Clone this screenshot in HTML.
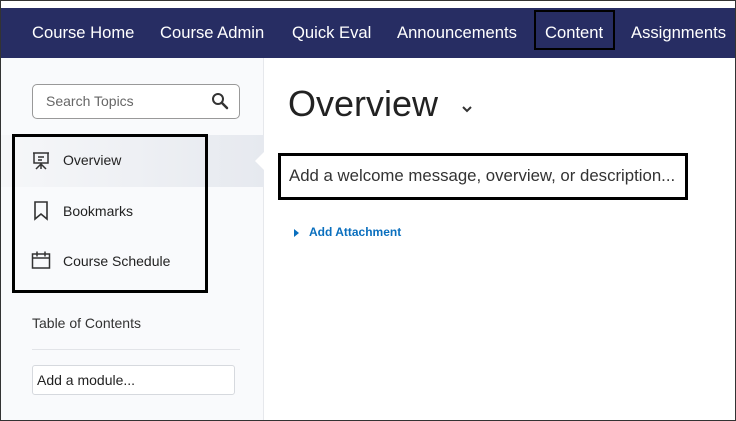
<!DOCTYPE html>
<html><head><style>
*{margin:0;padding:0;box-sizing:border-box}
body{width:736px;height:421px;overflow:hidden;background:#fff;font-family:"Liberation Sans",sans-serif;position:relative}
.frame{position:absolute;left:0;top:0;width:736px;height:421px;border:1px solid #333;z-index:10;pointer-events:none}
.nav{position:absolute;left:0;top:8px;width:736px;height:50px;background:#272d63}
.nav span{position:absolute;top:15px;color:#fff;font-size:16.6px;white-space:nowrap}
.side{position:absolute;left:0;top:58px;width:264px;height:363px;background:#f9fafc;border-right:1px solid #e6e8ec}
.a{position:absolute}
</style></head><body>
<div class="nav">
<span style="left:32px">Course Home</span>
<span style="left:160px">Course Admin</span>
<span style="left:292px">Quick Eval</span>
<span style="left:397px">Announcements</span>
<span style="left:545px">Content</span>
<span style="left:631px">Assignments</span>
<div class="a" style="left:534px;top:2px;width:81px;height:40px;border:2px solid #000"></div>
</div>
<div class="side"></div>
<div class="a" style="left:32px;top:84px;width:208px;height:35px;border:1px solid #999;border-radius:5px;background:#fff"></div>
<div class="a" style="left:46px;top:93px;font-size:14px;color:#666">Search Topics</div>
<svg class="a" style="left:211px;top:92px" width="18" height="18" viewBox="0 0 18 18"><circle cx="7" cy="7" r="5" fill="none" stroke="#333" stroke-width="2"/><path d="M11 11 L16 16" stroke="#333" stroke-width="2.5" stroke-linecap="round"/></svg>
<div class="a" style="left:0;top:135px;width:264px;height:52px;background:linear-gradient(90deg,#f6f7f9,#e6e9ef)"></div>
<div class="a" style="left:255px;top:151px;width:0;height:0;border-top:10px solid transparent;border-bottom:10px solid transparent;border-right:10px solid #fff"></div>
<svg class="a" style="left:31px;top:151px" width="20" height="20" viewBox="0 0 20 20" fill="none" stroke="#333" stroke-width="1.5"><path d="M2 2h16M3 2v10h14V2M7 6h6M7 9h4M10 12v6M10 13l-5 5M10 13l5 5"/></svg>
<div class="a" style="left:63px;top:152px;font-size:14px;color:#222">Overview</div>
<svg class="a" style="left:33px;top:201px" width="16" height="20" viewBox="0 0 16 20" fill="none" stroke="#333" stroke-width="1.6"><path d="M2 1h12v17l-6-5-6 5z"/></svg>
<div class="a" style="left:63px;top:203px;font-size:14px;color:#222">Bookmarks</div>
<svg class="a" style="left:31px;top:250px" width="20" height="20" viewBox="0 0 20 20" fill="none" stroke="#333" stroke-width="1.5"><rect x="1.5" y="4" width="17" height="14"/><path d="M1.5 8h17M6 1.5v5M14 1.5v5"/></svg>
<div class="a" style="left:63px;top:253px;font-size:14px;color:#222">Course Schedule</div>
<div class="a" style="left:12px;top:134px;width:196px;height:159px;border:3px solid #000"></div>
<div class="a" style="left:32px;top:315px;font-size:14px;color:#333">Table of Contents</div>
<div class="a" style="left:32px;top:349px;width:208px;height:1px;background:#e2e4e8"></div>
<div class="a" style="left:32px;top:365px;width:203px;height:30px;border:1px solid #d6d9de;border-radius:3px;background:#fff"></div>
<div class="a" style="left:37px;top:372px;font-size:14px;color:#222">Add a module...</div>
<div class="a" style="left:288px;top:83px;font-size:36px;color:#222">Overview</div>
<svg class="a" style="left:460px;top:104px" width="14" height="10" viewBox="0 0 14 10"><path d="M3 3l4 4 4-4" fill="none" stroke="#333" stroke-width="2"/></svg>
<div class="a" style="left:278px;top:153px;width:410px;height:47px;border:3px solid #000"></div>
<div class="a" style="left:289px;top:166px;font-size:16.8px;color:#333">Add a welcome message, overview, or description...</div>
<div class="a" style="left:294px;top:229px;width:0;height:0;border-top:4px solid transparent;border-bottom:4px solid transparent;border-left:5px solid #0a6fbe"></div>
<div class="a" style="left:309px;top:225px;font-size:12px;font-weight:bold;color:#0a6fbe">Add Attachment</div>
<div class="frame"></div>
</body></html>
